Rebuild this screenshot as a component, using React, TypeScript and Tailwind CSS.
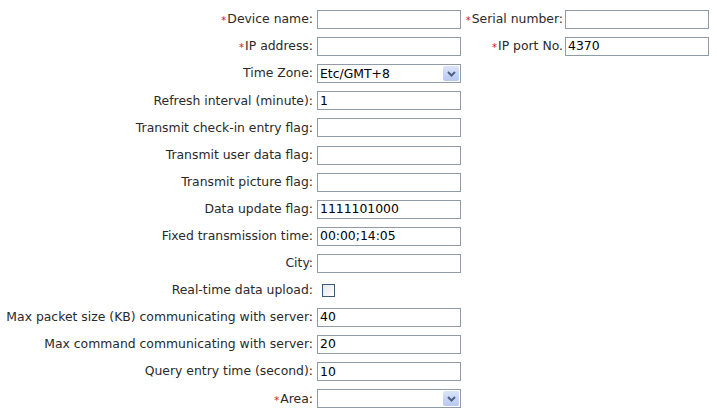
import React from 'react'

type Field = {
  label: string
  required?: boolean
  kind: 'text' | 'select' | 'check'
  value?: string
}

const fields: Field[] = [
  { label: 'Device name:', required: true, kind: 'text' },
  { label: 'IP address:', required: true, kind: 'text' },
  { label: 'Time Zone:', kind: 'select', value: 'Etc/GMT+8' },
  { label: 'Refresh interval (minute):', kind: 'text', value: '1' },
  { label: 'Transmit check-in entry flag:', kind: 'text' },
  { label: 'Transmit user data flag:', kind: 'text' },
  { label: 'Transmit picture flag:', kind: 'text' },
  { label: 'Data update flag:', kind: 'text', value: '1111101000' },
  { label: 'Fixed transmission time:', kind: 'text', value: '00:00;14:05' },
  { label: 'City:', kind: 'text' },
  { label: 'Real-time data upload:', kind: 'check' },
  { label: 'Max packet size (KB) communicating with server:', kind: 'text', value: '40' },
  { label: 'Max command communicating with server:', kind: 'text', value: '20' },
  { label: 'Query entry time (second):', kind: 'text', value: '10' },
  { label: 'Area:', required: true, kind: 'select' },
]

const extra: Record<number, Field> = {
  0: { label: 'Serial number:', required: true, kind: 'text' },
  1: { label: 'IP port No.', required: true, kind: 'text', value: '4370' },
}

function Star() {
  return <span className="text-[10px] text-[#c8161d] relative top-[1px] mr-[1px]">*</span>
}

function TextBox({ value }: { value?: string }) {
  return (
    <div className="w-[144px] h-[19px] border border-[#8f9ca8] bg-white px-[2px] flex items-center text-[12.4px] text-black leading-none">
      {value}
    </div>
  )
}

function SelectBox({ value }: { value?: string }) {
  return (
    <div className="w-[144px] h-[19px] border border-[#8f9ca8] bg-white flex items-center text-[12.4px] text-black leading-none">
      <span className="flex-1 pl-[2px]">{value}</span>
      <div className="w-[16px] h-[15px] mr-[1px] rounded-[2px] bg-gradient-to-b from-[#dbe4f8] to-[#b7c8ef] flex items-center justify-center">
        <svg width="9" height="6" viewBox="0 0 9 6">
          <path d="M1 1 L4.5 4.5 L8 1" stroke="#4d6185" strokeWidth="2" fill="none" />
        </svg>
      </div>
    </div>
  )
}

function CheckBox() {
  return <div className="ml-[5px] w-[13px] h-[13px] border border-[#3d5a74] bg-gradient-to-br from-[#e3e6ea] to-white" />
}

function Control({ f }: { f: Field }) {
  if (f.kind === 'select') return <SelectBox value={f.value} />
  if (f.kind === 'check') return <CheckBox />
  return <TextBox value={f.value} />
}

export default function App() {
  return (
    <div
      className="w-[717px] h-[416px] bg-white pt-[6px] text-[12.4px] text-[#2a2a2a]"
      style={{ fontFamily: '"DejaVu Sans", Verdana, sans-serif' }}
    >
      {fields.map((f, i) => (
        <div key={f.label} className="h-[27.1px] flex items-center">
          <div className="w-[313px] text-right whitespace-nowrap">
            {f.required && <Star />}
            {f.label}
          </div>
          <div className="ml-[4px]">
            <Control f={f} />
          </div>
          {extra[i] && (
            <>
              <div className="w-[102px] text-right whitespace-nowrap">
                {extra[i].required && <Star />}
                {extra[i].label}
              </div>
              <div className="ml-[2px]">
                <Control f={extra[i]} />
              </div>
            </>
          )}
        </div>
      ))}
    </div>
  )
}
